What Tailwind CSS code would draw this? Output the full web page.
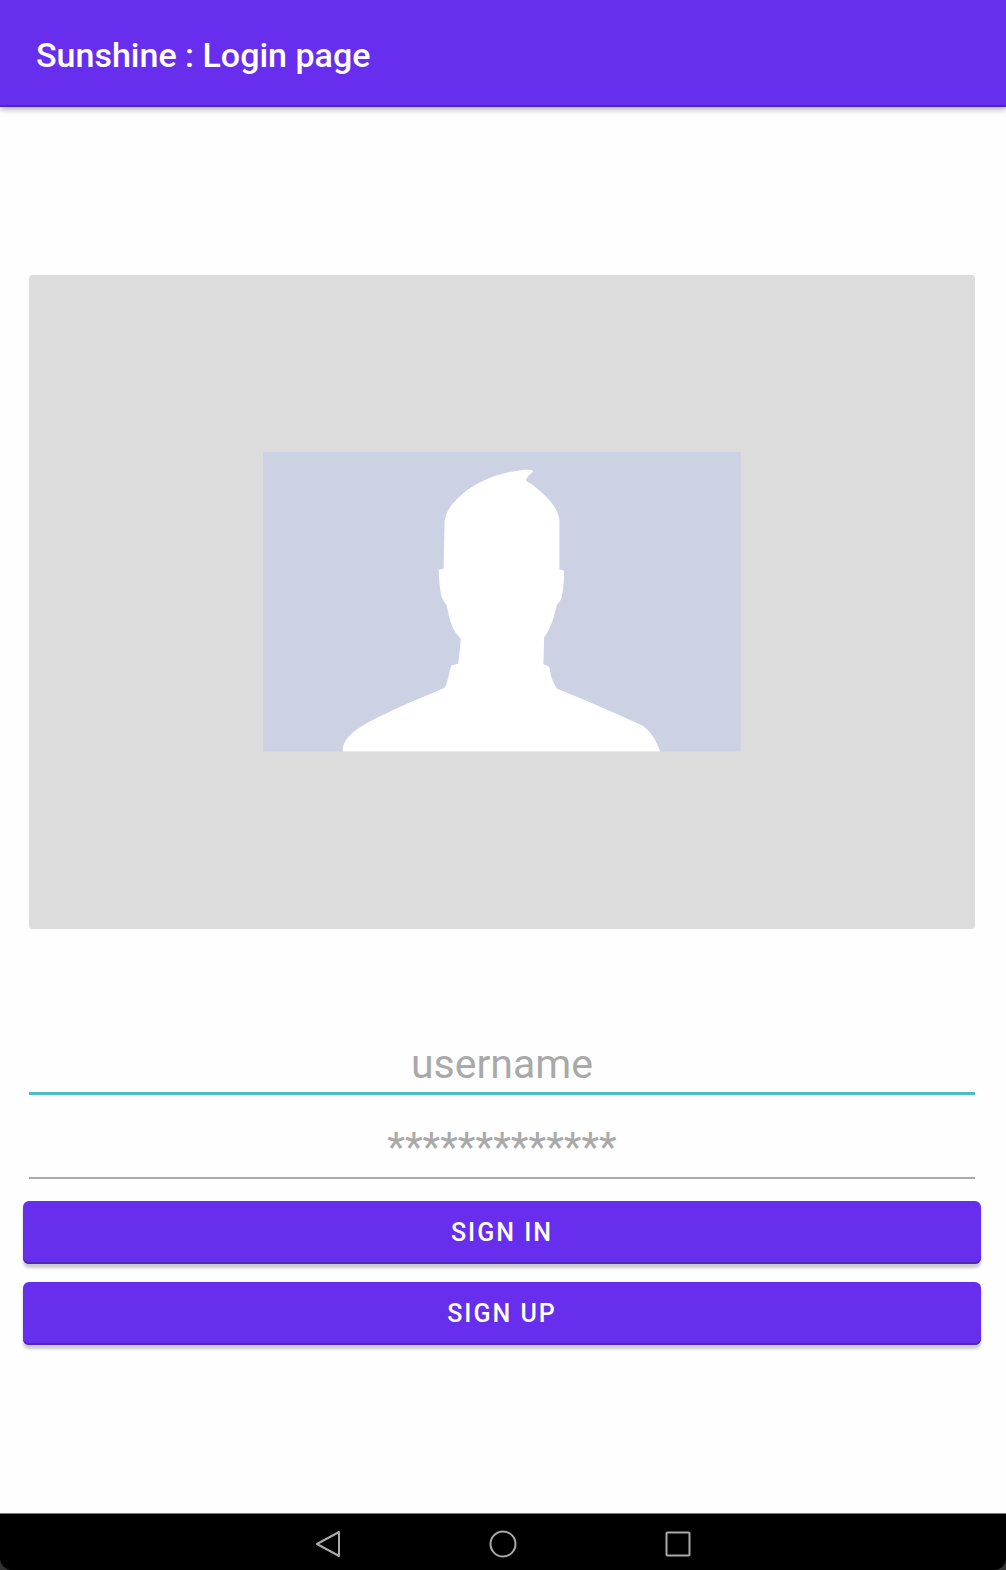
<!DOCTYPE html>
<html lang="en">
<head>
<meta charset="utf-8">
<meta name="viewport" content="width=device-width, initial-scale=1">
<title>Sunshine : Login page</title>
<script src="https://cdn.jsdelivr.net/npm/@tailwindcss/browser@4"></script>
</head>
<body class="bg-[#333] font-[Roboto,sans-serif]">
<div class="flex min-h-screen flex-col">
  <header class="relative flex h-[107px] items-center border-b-2 border-[#5126bd] bg-[#672eee] px-9 pt-1 shadow-[0_2px_6px_rgba(0,0,0,0.35)]">
    <h1 class="text-[34px] leading-10 font-medium text-white">Sunshine : Login page</h1>
  </header>

  <main class="flex flex-1 flex-col justify-center bg-[#fefefe] pr-[25px] pl-[23px]">
    <form class="flex flex-col">
      <button type="button" aria-label="Choose profile picture" class="mx-1.5 flex aspect-[946/654] items-center justify-center rounded-sm bg-[#dcdcdc]">
        <svg class="w-[50.5%]" viewBox="0 0 477 299" aria-hidden="true">
          <rect width="477" height="299" fill="#ccd2e3"/>
          <path fill="#fff" d="M270 19C267 16 252 19 246 20C228 24 212 31 199 42C188 52 182 60 181.300 70L180.300 116.500L175.500 117.500C175.500 126 176.500 134 177.700 142C178.500 146 181 150 183.300 152.700C185 160 186 167 188.500 173C191 179 194 183 197.500 186.500L195 211.500L188.500 213C186.500 215 186.500 221 185 225C184 229 183 234 180.500 236L146 250.500C130 258 113 265 99 273.700C88 280 79 289 79.500 299H396.500C393 288 387 279 379.500 273.500C352 260 322 248 293.500 236.300C290 231 288 226 287 221C286.500 217 286 214 284 213.500L280 212L280.700 185.300C288 175 291 163 293.300 153C297 148 298.300 147 298.700 142C300.500 134 300.500 126 300.700 118.500L296 117V70C296 61 291 53 283 45C276 38 269 32 262.700 29C263 24 267 23 270 19Z"/>
        </svg>
      </button>

      <div class="mx-1.5 mt-[106px] flex flex-col gap-6">
        <input type="text" aria-label="Username" placeholder="username" class="h-[60px] border-b-3 border-[#4fbcc0] bg-transparent pt-0.5 text-center text-[41px] text-[#555] outline-none placeholder:text-[#a9a9a9]">
        <input type="password" aria-label="Password" placeholder="*************" class="h-[60px] border-b-2 border-[#aaa] bg-transparent text-center text-[41px] text-[#555] outline-none placeholder:text-[#a9a9a9]">
      </div>

      <div class="mt-[22px] flex flex-col gap-[18px]">
        <button type="submit" class="h-[63px] rounded-md bg-[#672eee] text-[25px] font-medium tracking-[2px] text-white shadow-[inset_0_-2px_0_#5126bd,0_4px_3px_rgba(0,0,0,0.2)]">SIGN IN</button>
        <button type="button" class="h-[63px] rounded-md bg-[#672eee] text-[25px] font-medium tracking-[2px] text-white shadow-[inset_0_-2px_0_#5126bd,0_4px_3px_rgba(0,0,0,0.2)]">SIGN UP</button>
      </div>
    </form>
  </main>

  <nav aria-label="System" class="flex h-[57px] items-center justify-center gap-[147px] rounded-b-xl border-t border-[#777] bg-black pt-1">
    <button type="button" aria-label="Back"><svg class="size-7" viewBox="0 0 28 28" fill="none" stroke="#aaa" stroke-width="2" stroke-linejoin="round"><path d="M25 2V26L3 14Z"/></svg></button>
    <button type="button" aria-label="Home"><svg class="size-7" viewBox="0 0 28 28" fill="none" stroke="#aaa" stroke-width="2"><circle cx="14" cy="14" r="12.500"/></svg></button>
    <button type="button" aria-label="Overview"><svg class="size-7" viewBox="0 0 28 28" fill="none" stroke="#aaa" stroke-width="2"><rect x="2.500" y="2.500" width="23" height="23" rx="1"/></svg></button>
  </nav>
</div>
</body>
</html>
